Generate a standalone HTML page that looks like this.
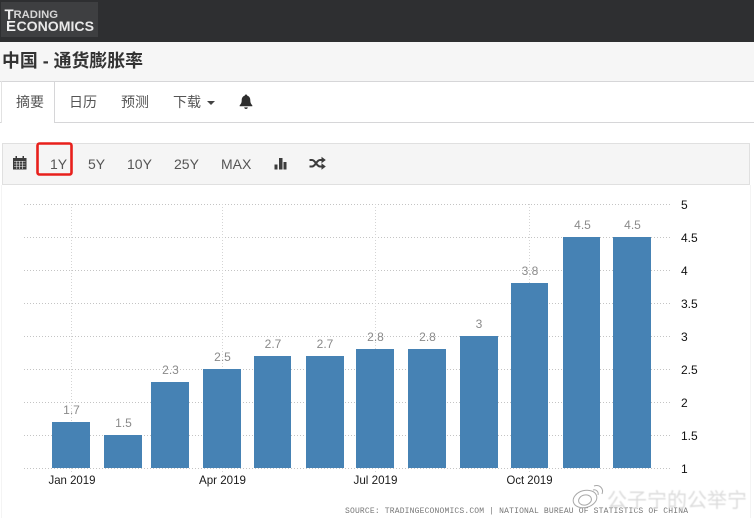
<!DOCTYPE html>
<html lang="zh"><head><meta charset="utf-8"><title>中国 - 通货膨胀率</title>
<style>
html,body{margin:0;padding:0;background:#fff}
body{width:754px;height:518px;overflow:hidden;position:relative}
svg{position:absolute;left:0;top:0;display:block}
text{font-family:"Liberation Sans","Noto Sans CJK SC",sans-serif}
</style></head><body>
<svg width="754" height="518" viewBox="0 0 754 518" xmlns="http://www.w3.org/2000/svg">
<defs><filter id="b" x="-5%" y="-20%" width="110%" height="140%"><feGaussianBlur stdDeviation=".6"/></filter></defs>
<rect width="754" height="518" fill="#fff"/>
<!-- header -->
<rect width="754" height="42" fill="#2e2f31"/>
<rect x="1" y="2" width="97" height="35" fill="#3e3f41"/>
<text x="4.500" y="19.500" font-size="15" font-weight="700" fill="#eeeeee">T</text>
<text x="13.500" y="18" font-size="11" font-weight="700" fill="#d6d6d6" textLength="44.500" lengthAdjust="spacingAndGlyphs">RADING</text>
<text x="6" y="31" font-size="15" font-weight="700" fill="#f2f2f2">E</text>
<text x="16.500" y="31" font-size="14" font-weight="700" fill="#e8e8e8" textLength="77.500" lengthAdjust="spacingAndGlyphs">CONOMICS</text>
<!-- title band -->
<rect y="42" width="754" height="39" fill="#f6f6f6"/>
<text x="2" y="67" font-size="18" font-weight="700" fill="#333" textLength="141" lengthAdjust="spacingAndGlyphs">中国 - 通货膨胀率</text>
<!-- tabs -->
<rect y="81" width="754" height="1" fill="#d6d6d8"/>
<rect y="122" width="754" height="1" fill="#d6d6d8"/>
<rect x="1" y="81" width="1" height="42" fill="#e2e2e2"/>
<rect x="54" y="81" width="1" height="42" fill="#d6d6d8"/>
<rect x="2" y="122" width="52" height="1" fill="#fff"/>
<text x="16" y="107" font-size="14" fill="#555">摘要</text>
<text x="69" y="107" font-size="14" fill="#555">日历</text>
<text x="121" y="107" font-size="14" fill="#555">预测</text>
<text x="173" y="107" font-size="14" fill="#555">下载</text>
<path d="M207 101h8l-4 4z" fill="#444"/>
<path d="M246 94.500c.9 0 1.300.6 1.300 1.200 2.200.6 3 2.400 3 4.600 0 3 1.100 4 2 5v1h-12.600v-1c.9-1 2-2 2-5 0-2.200.8-4 3-4.600 0-.6.400-1.200 1.300-1.200zM244.200 107.400h3.600c0 1-.8 1.600-1.800 1.600s-1.800-.6-1.800-1.600z" fill="#2e2e2e"/>
<!-- toolbar -->
<rect x="2.500" y="143.500" width="747" height="41" fill="#f5f5f5" stroke="#e0e0e0"/>
<path d="M13 158h13.500v11.500h-13.500z M15.500 156h1.500v3h-1.500z M22.500 156h1.500v3h-1.500z" fill="#3c3c3c"/>
<path d="M14 161.500h11.500M14 164h11.500M14 166.500h11.500M16.800 161v8M19.700 161v8M22.600 161v8" stroke="#f5f5f5" stroke-width=".6" fill="none"/>
<rect x="37.500" y="143.500" width="34" height="31" rx="2" fill="none" stroke="#e8201c" stroke-width="2.600"/>
<g font-size="14" fill="#555">
<text x="50" y="169">1Y</text>
<text x="88" y="169">5Y</text>
<text x="127" y="169">10Y</text>
<text x="174" y="169">25Y</text>
<text x="221" y="169">MAX</text>
</g>
<path d="M274.500 164.500h3v5h-3zM279 158h3.500v11.500h-3.500zM283.500 162h3v7.500h-3z" fill="#3c3c3c"/>
<path d="M309.500 160h2.500c3.500 0 4.500 6.500 8 6.500h2M309.500 166.500h2.500c3.500 0 4.500-6.500 8-6.500h2" fill="none" stroke="#3c3c3c" stroke-width="2"/>
<path d="M321.500 156.800l4.300 3.200-4.300 3.200zM321.500 163.300l4.300 3.200-4.300 3.200z" fill="#3c3c3c"/>
<!-- chart frame -->
<rect x="1" y="185" width="1" height="333" fill="#f4f4f4"/>
<rect x="750" y="185" width="1" height="333" fill="#f4f4f4"/>
<!-- grid -->
<g stroke="#c4c4c4" stroke-width="1" stroke-dasharray="1 2" fill="none">
<path d="M24 204.500H672M24 237.500H672M24 270.500H672M24 303.500H672M24 336.500H672M24 369.500H672M24 402.500H672M24 435.500H672M24 468.500H672"/>
<path d="M71.500 204V472M222.500 204V472M375.500 204V472M529.500 204V472" stroke="#d4d4d4"/>
</g>
<!-- bars -->
<g fill="#4682b4">
<rect x="52" y="422" width="38" height="46"/>
<rect x="104" y="435" width="38" height="33"/>
<rect x="151" y="382" width="38" height="86"/>
<rect x="203" y="369" width="38" height="99"/>
<rect x="254" y="356" width="37" height="112"/>
<rect x="306" y="356" width="38" height="112"/>
<rect x="356" y="349" width="38" height="119"/>
<rect x="408" y="349" width="38" height="119"/>
<rect x="460" y="336" width="38" height="132"/>
<rect x="511" y="283" width="37" height="185"/>
<rect x="563" y="237" width="37" height="231"/>
<rect x="613" y="237" width="38" height="231"/>
</g>
<!-- value labels -->
<g font-size="12" fill="#8a8a8a" text-anchor="middle">
<text x="71.500" y="414">1.7</text>
<text x="123.500" y="427">1.5</text>
<text x="170.500" y="374">2.3</text>
<text x="222.500" y="361">2.5</text>
<text x="273" y="348">2.7</text>
<text x="325" y="348">2.7</text>
<text x="375.500" y="341">2.8</text>
<text x="427.500" y="341">2.8</text>
<text x="479" y="328">3</text>
<text x="530" y="275">3.8</text>
<text x="582.500" y="229">4.5</text>
<text x="632.500" y="229">4.5</text>
</g>
<!-- y axis -->
<g font-size="12" fill="#111">
<text x="681" y="209">5</text>
<text x="681" y="242">4.5</text>
<text x="681" y="275">4</text>
<text x="681" y="308">3.5</text>
<text x="681" y="341">3</text>
<text x="681" y="374">2.5</text>
<text x="681" y="407">2</text>
<text x="681" y="440">1.5</text>
<text x="681" y="473">1</text>
</g>
<!-- x axis -->
<g font-size="12" fill="#1a1a1a">
<text x="48.500" y="484" textLength="47" lengthAdjust="spacingAndGlyphs">Jan 2019</text>
<text x="199" y="484" textLength="47" lengthAdjust="spacingAndGlyphs">Apr 2019</text>
<text x="353.500" y="484" textLength="44" lengthAdjust="spacingAndGlyphs">Jul 2019</text>
<text x="506.500" y="484" textLength="46" lengthAdjust="spacingAndGlyphs">Oct 2019</text>
</g>
<text x="345" y="513" font-size="8" fill="#777" textLength="343" style='font-family:"Liberation Mono",monospace'>SOURCE: TRADINGECONOMICS.COM | NATIONAL BUREAU OF STATISTICS OF CHINA</text>
<!-- watermark -->
<g fill="none" stroke="#a8a8a8" stroke-width="1">
<ellipse cx="585" cy="499" rx="12" ry="8.500" transform="rotate(-15 585 499)"/>
<ellipse cx="585" cy="500" rx="6.500" ry="5" transform="rotate(-15 585 500)"/>
<path d="M593 490c3-1 6 2 5 5M594 486c6-2 10 3 8 8"/>
</g>
<text x="607" y="507" font-size="20" fill="#dcdcdc" filter="url(#b)" textLength="140" lengthAdjust="spacingAndGlyphs">公子宁的公举宁</text>
</svg>
</body></html>
